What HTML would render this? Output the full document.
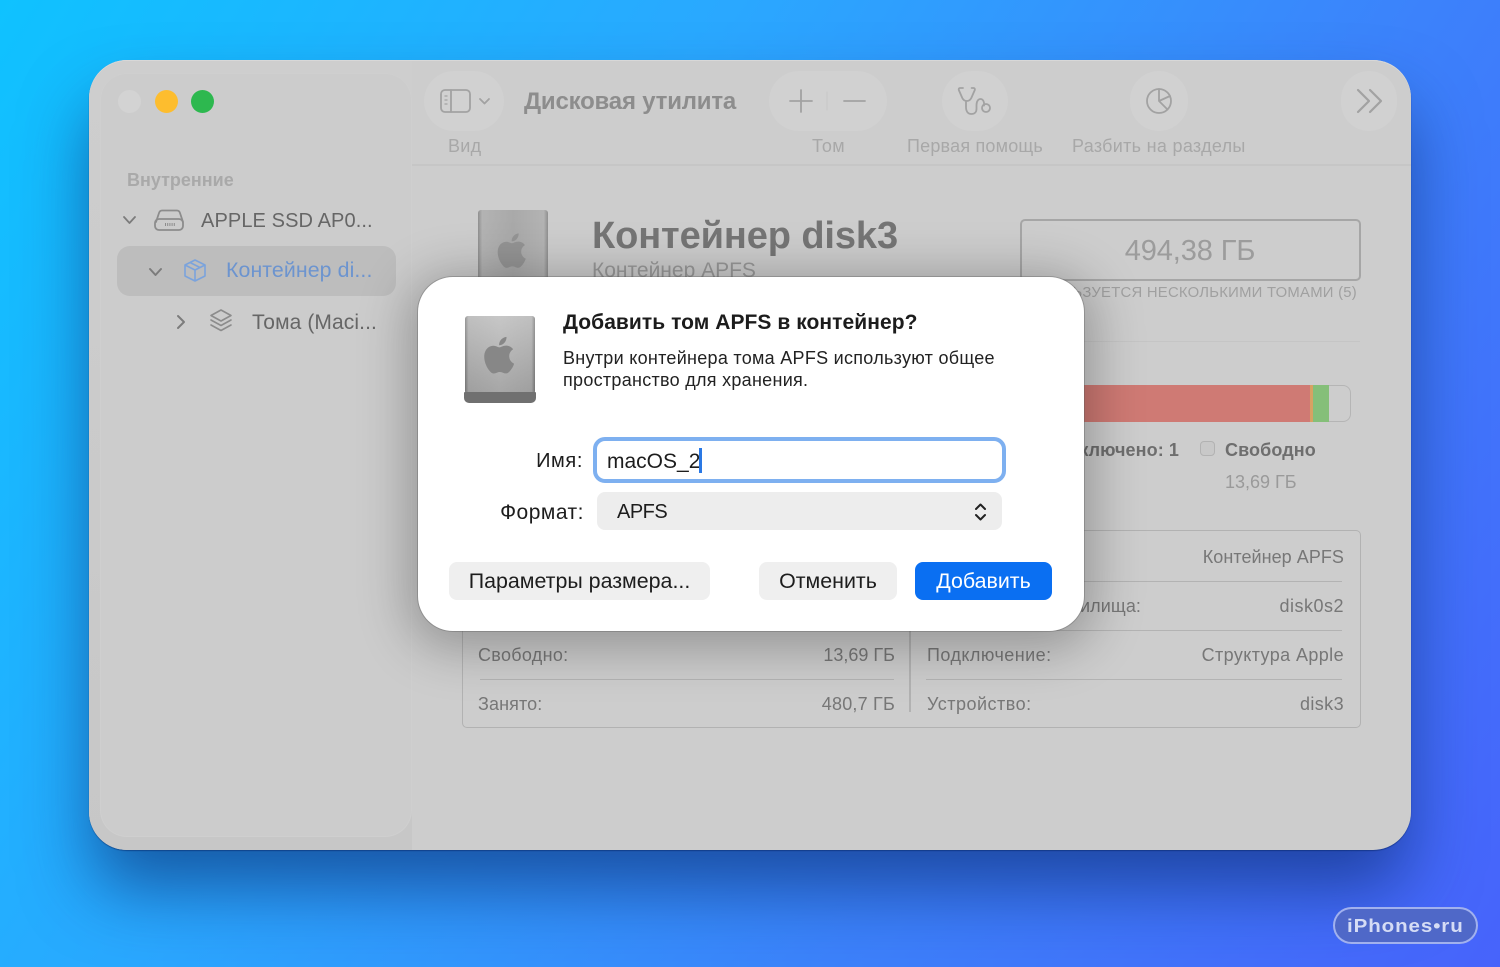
<!DOCTYPE html>
<html><head><meta charset="utf-8"><style>
html,body{margin:0;padding:0}
body{width:1500px;height:967px;overflow:hidden;position:relative;font-family:"Liberation Sans",sans-serif;background:linear-gradient(122deg,#0fc2ff 0%,#2aa8ff 35%,#3c82fb 68%,#4763fb 100%)}
.a{position:absolute}
.t{position:absolute;white-space:nowrap;line-height:1}
.r{text-align:right}
#win{position:absolute;left:89px;top:60px;width:1322px;height:790px;border-radius:38px;background:#cdcdcd;box-shadow:0 42px 70px -4px rgba(10,40,110,.62),0 1px 1px rgba(0,30,90,.5),inset 0 1px 0 #d8d8d8}
.pill{position:absolute;background:#d1d1d1;border-radius:30px;height:60px;top:71px}
.g{color:#a8a8a8}
.d{color:#777}
.line{position:absolute;height:1px;background:#b3b3b3}
#dlg{position:absolute;left:418px;top:277px;width:666px;height:354px;border-radius:35px;background:#fff;box-shadow:0 0 0 1px rgba(90,90,90,.35),0 8px 50px 10px rgba(0,0,0,.27)}
.btn{position:absolute;top:562px;height:38px;border-radius:8px;background:#efefef;color:#1d1d1d;font-size:21.4px;line-height:39px;text-align:center;white-space:nowrap}
svg{position:absolute;overflow:visible}
</style></head><body>
<div id="win"></div>
<!-- sidebar -->
<div class="a" style="left:89px;top:61px;width:323px;height:789px;border-radius:38px 0 0 38px;background:linear-gradient(180deg,#cecece,#c7c7c7)"></div>
<div class="a" style="left:101px;top:74px;width:310px;height:762px;border-radius:26px;background:#cccccc;box-shadow:0 0 0 1px #cfcfcf"></div>
<div class="a" style="left:412px;top:164px;width:999px;height:1.5px;background:#c6c6c6"></div>
<!-- traffic -->
<div class="a" style="left:118px;top:90px;width:23px;height:23px;border-radius:50%;background:#d3d3d3"></div>
<div class="a" style="left:155px;top:90px;width:23px;height:23px;border-radius:50%;background:#fdbd2e"></div>
<div class="a" style="left:191px;top:90px;width:23px;height:23px;border-radius:50%;background:#2db84f"></div>
<!-- toolbar pills -->
<div class="pill" style="left:424px;width:80px"></div>
<div class="pill" style="left:769px;width:118px"></div>
<div class="pill" style="left:942px;width:66px"></div>
<div class="pill" style="left:1130px;width:58px"></div>
<div class="pill" style="left:1341px;width:56px"></div>
<svg style="left:0;top:0" width="1500" height="967" fill="none" stroke="#a2a2a2" stroke-width="1.800" stroke-linecap="round" stroke-linejoin="round">
<rect x="441" y="90" width="29" height="22" rx="4"/><path d="M451 90v22"/><path d="M445 96h2M445 100h2M445 104h2" stroke-width="1.3"/>
<path d="M480 99l4.500 4.500 4.500-4.500" stroke-width="1.800"/>
<path d="M801 90v22M790 101h22M844 101h21"/><path d="M827 92v18" stroke="#c6c6c6" stroke-width="1"/>
<path d="M963 88h-3c-1 0-1.500 1-1.200 2l3.500 8c2 4 7 4 9 0l3.500-8c.3-1-.2-2-1.200-2h-2"/><path d="M966 102v5c0 5 2.500 7 5.500 7s5-2 5-5v-4c0-4 2-6 4-6s4 2 3.500 6.500"/><circle cx="986" cy="108" r="4"/>
<circle cx="1159" cy="101" r="12"/><path d="M1159 89v12l8.500 8.500M1159 101l11-5" stroke-width="1.800"/>
<path d="M1358 90l11 11-11 11M1370 90l11 11-11 11" stroke-width="2.200"/>
<path d="M124 217l5.500 6 5.500-6" stroke="#7c7c7c"/>
<path d="M156 222l3-9c.5-1.500 1.500-2.500 3-2.500h15c1.500 0 2.500 1 3 2.500l3 9" stroke="#8c8c8c"/><rect x="155" y="219" width="28" height="11" rx="4" stroke="#8c8c8c"/><path d="M165 224.500h10" stroke="#8c8c8c" stroke-dasharray="1 1.200" stroke-width="3" stroke-linecap="butt"/>
</svg>
<!-- toolbar text -->
<div class="t" style="left:524px;top:90px;font-size:24px;font-weight:bold;color:#8d8d8d;letter-spacing:-.2px">Дисковая утилита</div>
<div class="t g" style="left:448px;top:137px;font-size:18px;letter-spacing:.3px">Вид</div>
<div class="t g" style="left:812px;top:137px;font-size:18px;letter-spacing:.3px">Том</div>
<div class="t g" style="left:907px;top:137px;font-size:18px;letter-spacing:.2px">Первая помощь</div>
<div class="t g" style="left:1072px;top:137px;font-size:18px;letter-spacing:.3px">Разбить на разделы</div>
<!-- sidebar items -->
<div class="t" style="left:127px;top:171px;font-size:18px;font-weight:bold;color:#a9a9a9;letter-spacing:0">Внутренние</div>
<div class="t" style="left:201px;top:211px;font-size:20px;color:#666;letter-spacing:.1px">APPLE SSD AP0...</div>
<div class="a" style="left:117px;top:246px;width:279px;height:50px;border-radius:13px;background:#bdbdbd"></div>
<div class="t" style="left:226px;top:260px;font-size:21.300px;color:#6c94cf;letter-spacing:.1px">Контейнер di...</div>
<div class="t" style="left:252px;top:312px;font-size:21px;color:#666;letter-spacing:.1px">Тома (Maci...</div>
<svg style="left:0;top:0" width="1500" height="967" fill="none" stroke-linecap="round" stroke-linejoin="round" stroke-width="1.600">
<path d="M150 269l5.500 6 5.500-6" stroke="#7c7c7c" stroke-width="2"/>
<path d="M195 260l10 5v11l-10 5-10-5v-11zM185 265l10 5 10-5M195 270v11M190 262.500l10 5" stroke="#7ba3dc"/>
<path d="M178 316l6 6-6 6" stroke="#7c7c7c" stroke-width="2"/>
<path d="M221 310l10 5.500-10 5.500-10-5.500zM211 320l10 5.500 10-5.500M211 325l10 5.500 10-5.500" stroke="#8c8c8c"/>
</svg>
<!-- header main -->
<div class="a" style="left:478px;top:210px;width:70px;height:70px;border-radius:3px 3px 0 0;background:linear-gradient(90deg,#8f8f8f 0,#b3b3b3 6%,#a9a9a9 50%,#b3b3b3 94%,#8f8f8f 100%)"></div>
<svg style="left:497px;top:233px" width="32" height="34" viewBox="3 1 18 21"><path fill="#949494" d="M17.050 12.540c-.03-2.700 2.200-4 2.300-4.060-1.250-1.840-3.200-2.090-3.900-2.120-1.660-.17-3.240.98-4.080.98-.84 0-2.140-.95-3.520-.93-1.810.03-3.480 1.050-4.410 2.670-1.880 3.260-.48 8.090 1.350 10.740.9 1.290 1.960 2.740 3.360 2.690 1.350-.05 1.860-.87 3.490-.87 1.630 0 2.090.87 3.520.85 1.450-.03 2.370-1.320 3.260-2.620 1.030-1.500 1.450-2.950 1.470-3.030-.03-.01-2.810-1.080-2.840-4.300zM14.360 4.630c.74-.9 1.240-2.150 1.110-3.390-1.070.04-2.360.71-3.130 1.600-.69.79-1.290 2.060-1.130 3.280 1.190.09 2.410-.61 3.150-1.490z"/></svg>
<div class="t" style="left:592px;top:217px;font-size:38px;font-weight:bold;color:#757575;letter-spacing:-.1px">Контейнер disk3</div>
<div class="t" style="left:592px;top:260px;font-size:21px;color:#999;letter-spacing:0">Контейнер APFS</div>
<div class="a" style="box-sizing:border-box;left:1020px;top:219px;width:341px;height:62px;border:2px solid #a6a6a6;border-radius:5px"></div>
<div class="t r" style="left:1022px;width:336px;text-align:center;top:237px;font-size:29px;color:#9c9c9c;letter-spacing:-.1px">494,38 ГБ</div>
<div class="t r" style="right:143px;top:286px;font-size:14.850px;color:#a0a0a0;letter-spacing:.25px">ИСПОЛЬЗУЕТСЯ НЕСКОЛЬКИМИ ТОМАМИ (5)</div>
<div class="line" style="left:1080px;top:341px;width:280px;background:#c5c5c5"></div>
<!-- bar -->
<div class="a" style="left:1060px;top:385px;width:291px;height:37px;border-radius:0 8px 8px 0;box-shadow:inset 0 0 0 1px #b5b5b5"></div>
<div class="a" style="left:1060px;top:385px;width:250px;height:37px;background:#cf7a74"></div>
<div class="a" style="left:1310px;top:385px;width:3px;height:37px;background:#d8a163"></div>
<div class="a" style="left:1313px;top:385px;width:16px;height:37px;background:#85bf79"></div>
<div class="t" style="right:321px;top:441px;font-size:18px;font-weight:bold;color:#6e6e6e;letter-spacing:.1px">ключено: 1</div>
<div class="a" style="left:1200px;top:441px;width:13px;height:13px;border:1px solid #b2b2b2;border-radius:4px;background:#c8c8c8"></div>
<div class="t" style="left:1225px;top:441px;font-size:18px;font-weight:bold;color:#6e6e6e;letter-spacing:.1px">Свободно</div>
<div class="t" style="left:1225px;top:473px;font-size:18px;color:#9a9a9a;letter-spacing:0">13,69 ГБ</div>
<!-- table -->
<div class="a" style="box-sizing:border-box;left:462px;top:530px;width:899px;height:198px;border:1.500px solid #b2b2b2;border-radius:5px"></div>
<div class="a" style="left:909px;top:532px;width:1.500px;height:180px;background:#b2b2b2"></div>
<div class="line" style="left:926px;top:581px;width:416px"></div>
<div class="line" style="left:926px;top:630px;width:416px"></div>
<div class="line" style="left:926px;top:679px;width:416px"></div>
<div class="line" style="left:480px;top:679px;width:414px"></div>
<div class="t d" style="right:156px;top:548px;font-size:18px;letter-spacing:.05px">Контейнер APFS</div>
<div class="t d" style="left:1080px;top:597px;font-size:18px;letter-spacing:.1px">илища:</div>
<div class="t d" style="right:156px;top:597px;font-size:18px;letter-spacing:.5px">disk0s2</div>
<div class="t d" style="left:478px;top:646px;font-size:18px;letter-spacing:.3px">Свободно:</div>
<div class="t d" style="right:605px;top:646px;font-size:18px">13,69 ГБ</div>
<div class="t d" style="left:927px;top:646px;font-size:18px;letter-spacing:.45px">Подключение:</div>
<div class="t d" style="right:156px;top:646px;font-size:18px;letter-spacing:.4px">Структура Apple</div>
<div class="t d" style="left:478px;top:695px;font-size:18px;letter-spacing:.1px">Занято:</div>
<div class="t d" style="right:605px;top:695px;font-size:18px;letter-spacing:.2px">480,7 ГБ</div>
<div class="t d" style="left:927px;top:695px;font-size:18px;letter-spacing:.5px">Устройство:</div>
<div class="t d" style="right:156px;top:695px;font-size:18px;letter-spacing:.4px">disk3</div>
<!-- dialog -->
<div id="dlg"></div>
<div class="a" style="left:465px;top:316px;width:70px;height:78px;border-radius:3px;background:linear-gradient(90deg,#7d7d7d 0,#b0b0b0 5%,#b9b9b9 50%,#b0b0b0 95%,#7d7d7d 100%)"></div>
<div class="a" style="left:465px;top:316px;width:70px;height:78px;border-radius:3px;background:linear-gradient(180deg,rgba(255,255,255,.2),rgba(0,0,0,.1))"></div>
<div class="a" style="left:464px;top:392px;width:72px;height:11px;border-radius:1px 1px 5px 5px;background:#707070"></div>
<svg style="left:485px;top:336px" width="31" height="37" viewBox="3 1 18 21"><path fill="#878787" d="M17.050 12.540c-.03-2.700 2.200-4 2.300-4.060-1.250-1.840-3.200-2.090-3.900-2.120-1.660-.17-3.240.98-4.080.98-.84 0-2.140-.95-3.520-.93-1.810.03-3.480 1.050-4.410 2.670-1.880 3.260-.48 8.090 1.350 10.740.9 1.290 1.960 2.740 3.360 2.690 1.350-.05 1.860-.87 3.490-.87 1.630 0 2.090.87 3.520.85 1.450-.03 2.370-1.320 3.260-2.620 1.030-1.500 1.450-2.950 1.470-3.030-.03-.01-2.810-1.080-2.840-4.300zM14.360 4.630c.74-.9 1.240-2.150 1.110-3.390-1.070.04-2.360.71-3.130 1.600-.69.79-1.290 2.060-1.130 3.280 1.190.09 2.410-.61 3.150-1.490z"/></svg>
<div class="t" style="left:563px;top:312px;font-size:21px;font-weight:bold;color:#1c1c1c;letter-spacing:.06px">Добавить том APFS в контейнер?</div>
<div class="t" style="left:563px;top:349px;font-size:18px;color:#222;letter-spacing:.28px">Внутри контейнера тома APFS используют общее</div>
<div class="t" style="left:563px;top:371px;font-size:18px;color:#222;letter-spacing:.28px">пространство для хранения.</div>
<div class="t" style="right:917px;top:451px;font-size:20px;color:#1d1d1d;letter-spacing:.6px">Имя:</div>
<div class="a" style="left:593px;top:437px;width:405px;height:38px;border:4px solid #7eb0f0;border-radius:12px;background:#fff"></div>
<div class="t" style="left:607px;top:451px;font-size:21px;color:#1d1d1d">macOS_2</div>
<div class="a" style="left:699px;top:448px;width:2.500px;height:25px;background:#2a78e4"></div>
<div class="t" style="right:916px;top:502px;font-size:21px;color:#1d1d1d;letter-spacing:.5px">Формат:</div>
<div class="a" style="left:597px;top:492px;width:405px;height:38px;border-radius:8px;background:#ededed"></div>
<div class="t" style="left:617px;top:502px;font-size:20px;color:#1d1d1d;letter-spacing:-.5px">APFS</div>
<svg style="left:0;top:0" width="1500" height="967" fill="none" stroke="#222" stroke-width="2" stroke-linecap="round" stroke-linejoin="round"><path d="M976 509l4.500-4.500 4.500 4.500M976 515l4.500 4.500 4.500-4.500"/></svg>
<div class="btn" style="left:449px;width:261px">Параметры размера...</div>
<div class="btn" style="left:759px;width:138px">Отменить</div>
<div class="btn" style="left:915px;width:137px;background:#0a6ff2;color:#fff">Добавить</div>
<!-- watermark -->
<div class="a" style="left:1333px;top:907px;width:141px;height:33px;border:2px solid rgba(175,190,245,.85);border-radius:19px;background:#4f68c8"></div>
<div class="t" style="left:1347px;top:917px;font-size:18px;font-weight:bold;color:#d5dcf5;letter-spacing:.8px;transform:scaleX(1.14);transform-origin:left center">iPhones•ru</div>
</body></html>
